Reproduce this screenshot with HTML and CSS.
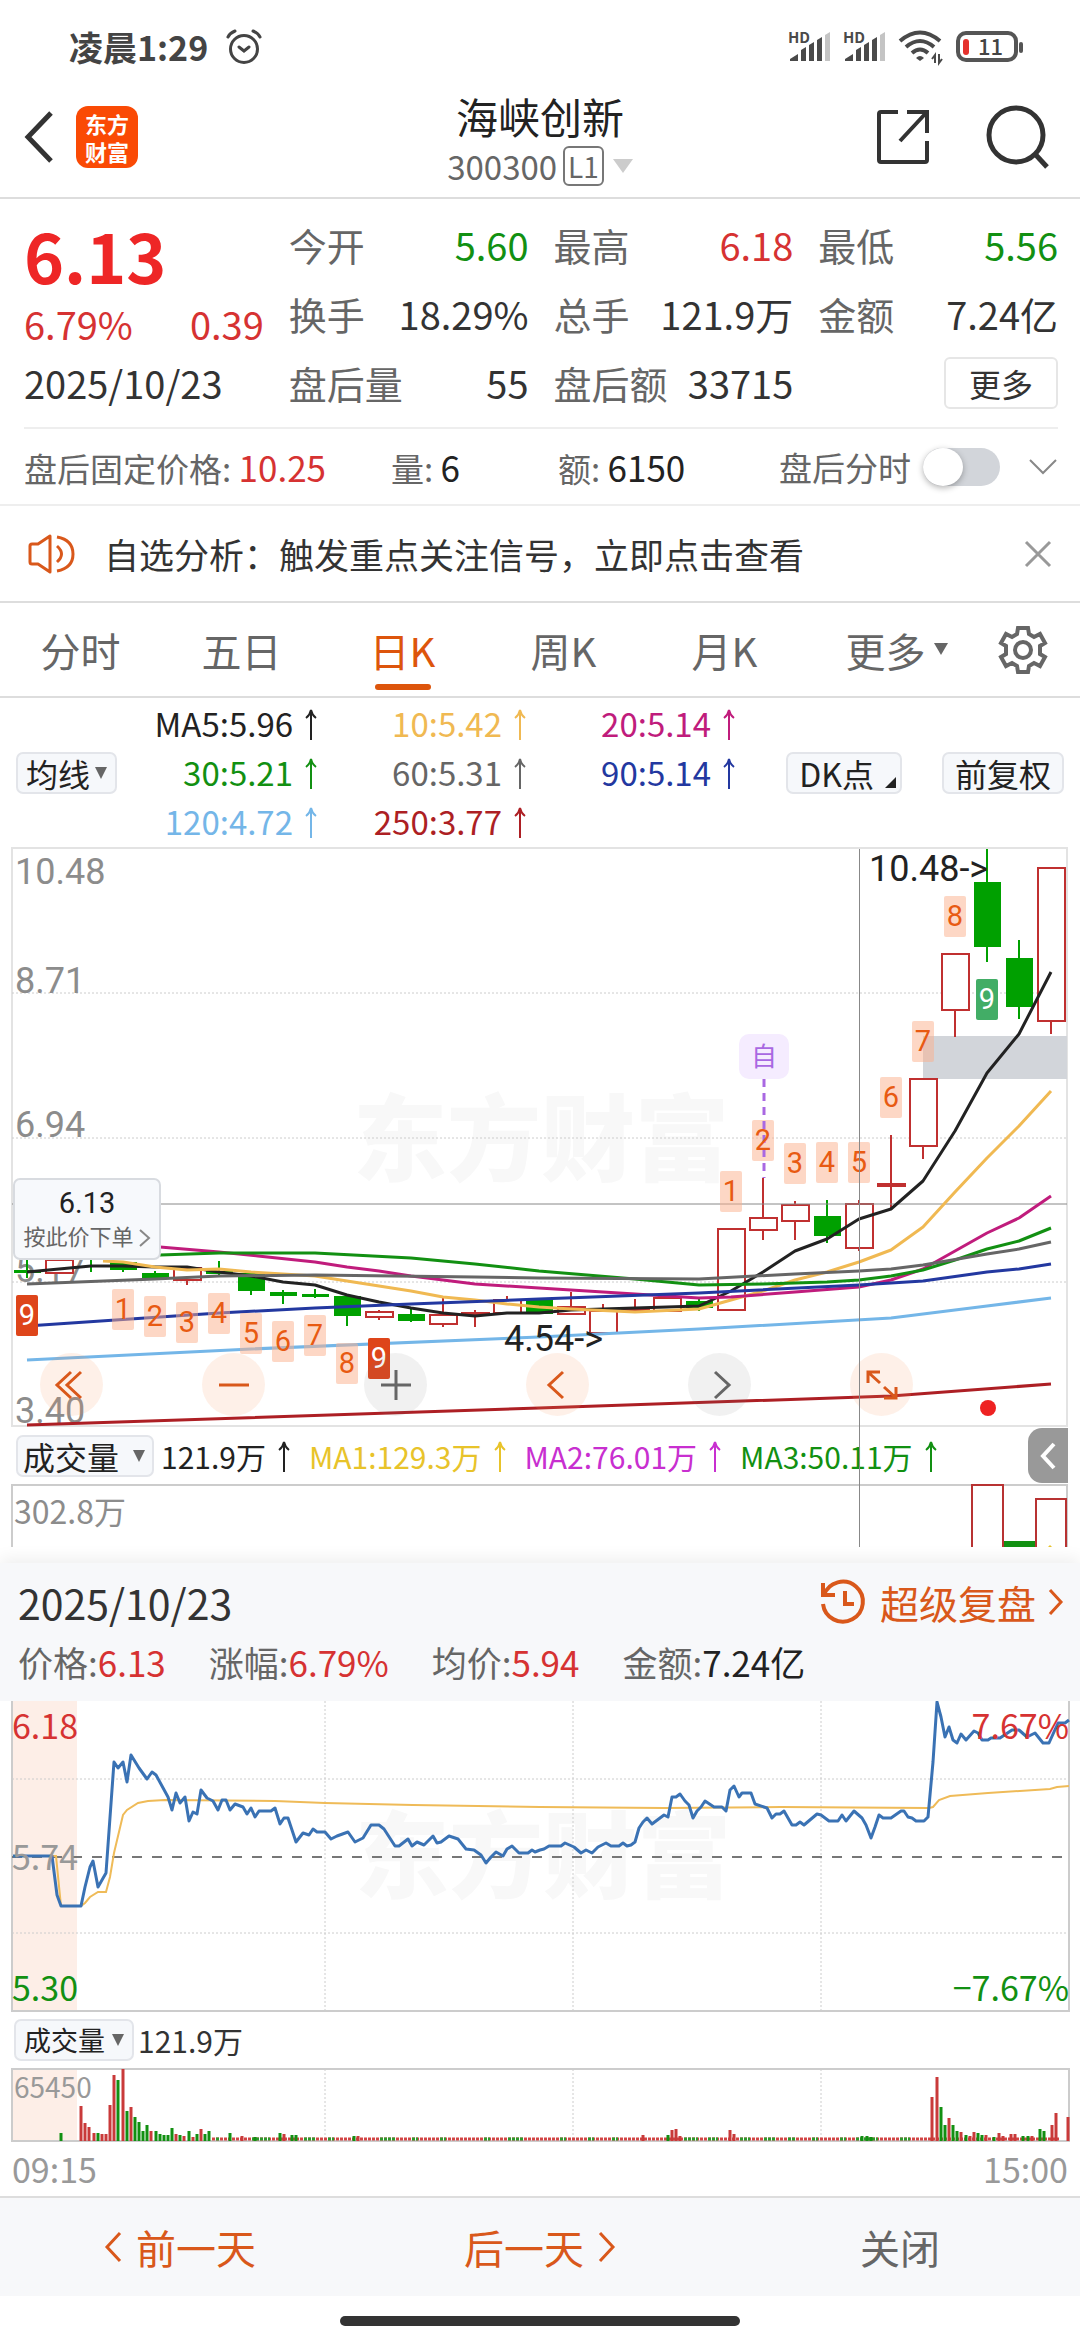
FILE: index.html
```html
<!DOCTYPE html>
<html lang="zh-CN">
<head>
  <meta charset="UTF-8" />
  <meta name="viewport" content="width=device-width, initial-scale=1.0">
  <title>海峡创新 300300</title>
  <link rel="stylesheet" href="styles.css">
</head>
<body>

<svg class="defs" width="0" height="0">
  <symbol id="up" viewBox="0 0 12 32">
    <path d="M6 31V2 M1 9Q5 6 6 1Q7 6 11 9" fill="none" stroke="currentColor" stroke-width="2"/>
  </symbol>
  <symbol id="signal" viewBox="0 0 42 32">
    <path d="M1 30V28L9 23V30Z M12 30V19L17 16V30Z M20 30V14L25 11V30Z M28 30V9L33 6V30Z" fill="#4a4a4a"/>
    <path d="M36 30V4L41 1V30Z" fill="#c4c4c4"/>
  </symbol>
</svg>

<div class="status-bar">
  <div class="status-left">
    <span>凌晨1:29</span>
    <svg width="36" height="36" viewBox="0 0 36 36" fill="none" stroke="#444" stroke-width="3" stroke-linecap="round">
      <circle cx="18" cy="20" r="13.5"/>
      <path d="M2 8 Q4 4 9 2 M34 8 Q32 4 27 2 M13 18 L18 22 L23 18"/>
    </svg>
  </div>
  <div class="status-right">
    <svg class="signal" width="42" height="32" viewBox="0 0 42 32">
      <use href="#signal"/>
      <text x="-1" y="12">HD</text>
    </svg>
    <svg class="signal" width="42" height="32" viewBox="0 0 42 32">
      <use href="#signal"/>
      <text x="-1" y="12">HD</text>
    </svg>
    <svg width="44" height="34" viewBox="0 0 44 34" fill="none" stroke="#4a4a4a" stroke-width="4">
      <path d="M1 11Q21 -6 41 11 M7 17Q21 5 35 17 M13 23Q21 16 29 23"/>
      <path d="M21 31L17 28Q21 24 25 28Z" fill="#4a4a4a" stroke="none"/>
      <path d="M36 33V25L33 29 M40 24V33L43 29" stroke-width="2"/>
    </svg>
    <svg class="battery" width="68" height="32" viewBox="0 0 68 32">
      <rect x="2" y="2" width="58" height="27" rx="8" fill="none" stroke="#555" stroke-width="4"/>
      <rect x="7" y="8" width="6" height="16" rx="3" fill="#e5322d"/>
      <path d="M65 13V20" stroke="#555" stroke-width="4" stroke-linecap="round"/>
      <text x="22" y="24">11</text>
    </svg>
  </div>
</div>

<header>
  <div class="header-side">
    <button class="icon-btn back-btn" aria-label="返回">
      <svg width="30" height="52" viewBox="0 0 30 52" fill="none" stroke="#333" stroke-width="5"><path d="M27 2L4 26L27 50"/></svg>
    </button>
    <div class="logo"><span>东方</span><span>财富</span></div>
  </div>
  <div class="header-title">
    <h1>海峡创新</h1>
    <div class="code">300300<span class="level">L1</span><i class="tri tri-light"></i></div>
  </div>
  <div class="header-side header-actions">
    <button class="icon-btn" aria-label="分享">
      <svg width="54" height="56" viewBox="0 0 54 56" fill="none" stroke="#333" stroke-width="4">
        <path d="M22 3H5Q3 3 3 5V51Q3 53 5 53H49Q51 53 51 51V32"/>
        <path d="M31 3H51V24 M50 4L24 32"/>
      </svg>
    </button>
    <button class="icon-btn" aria-label="搜索">
      <svg width="64" height="64" viewBox="0 0 64 64" fill="none" stroke="#333" stroke-width="5">
        <circle cx="30" cy="30" r="27"/><path d="M49 49L61 62"/>
      </svg>
    </button>
  </div>
</header>

<section class="quote">
  <div class="quote-main">
    <strong class="price">6.13</strong>
    <div class="change"><span>6.79%</span><span>0.39</span></div>
    <div class="date">2025/10/23</div>
  </div>
  <dl class="quote-grid">
    <div><dt>今开</dt><dd class="green">5.60</dd></div>
    <div><dt>最高</dt><dd class="red">6.18</dd></div>
    <div><dt>最低</dt><dd class="green">5.56</dd></div>
    <div><dt>换手</dt><dd>18.29%</dd></div>
    <div><dt>总手</dt><dd>121.9万</dd></div>
    <div><dt>金额</dt><dd>7.24亿</dd></div>
    <div><dt>盘后量</dt><dd>55</dd></div>
    <div><dt>盘后额</dt><dd>33715</dd></div>
    <div class="more-cell"><button class="more-btn">更多</button></div>
  </dl>
</section>

<section class="after-hours">
  <div>盘后固定价格: <b class="red">10.25</b></div>
  <div>量: <b>6</b></div>
  <div>额: <b>6150</b></div>
  <div class="after-toggle">
    <label for="after-switch">盘后分时</label>
    <input type="checkbox" id="after-switch" class="switch">
    <button class="icon-btn" aria-label="展开">
      <svg width="30" height="18" viewBox="0 0 30 18" fill="none" stroke="#888" stroke-width="2"><path d="M2 2L15 15L28 2"/></svg>
    </button>
  </div>
</section>

<section class="notice">
  <svg width="48" height="40" viewBox="0 0 48 40" fill="none" stroke="#d9581b" stroke-width="3" stroke-linejoin="round">
    <path d="M22 2V38L10 30H4Q2 30 2 28V12Q2 10 4 10H10Z"/>
    <path d="M29 12Q38 20 29 28 M29 3Q45 6 45 20Q45 34 29 37"/>
  </svg>
  <a href="#">自选分析：触发重点关注信号，立即点击查看</a>
  <button class="icon-btn" aria-label="关闭提示">
    <svg width="28" height="28" viewBox="0 0 28 28" stroke="#999" stroke-width="3"><path d="M2 2L26 26M26 2L2 26"/></svg>
  </button>
</section>

<nav class="tabs">
  <button>分时</button>
  <button>五日</button>
  <button class="active">日K</button>
  <button>周K</button>
  <button>月K</button>
  <button class="has-menu">更多</button>
  <button class="gear" aria-label="设置">
    <svg width="50" height="50" viewBox="0 0 50 50" fill="none" stroke="#666" stroke-width="4">
      <path d="M20 3H30L31 9L36 12L42 9L47 18L42 21V29L47 32L42 41L36 38L31 41L30 47H20L19 41L14 38L8 41L3 32L8 29V21L3 18L8 9L14 12L19 9Z"/>
      <circle cx="25" cy="25" r="8"/>
    </svg>
  </button>
</nav>

<div class="ma-bar">
  <button class="pill">均线<i class="tri"></i></button>
  <div class="ma-list">
    <span class="c-black">MA5:5.96<svg class="up"><use href="#up"/></svg></span>
    <span class="c-gold">10:5.42<svg class="up"><use href="#up"/></svg></span>
    <span class="c-magenta">20:5.14<svg class="up"><use href="#up"/></svg></span>
    <span class="c-green">30:5.21<svg class="up"><use href="#up"/></svg></span>
    <span class="c-gray">60:5.31<svg class="up"><use href="#up"/></svg></span>
    <span class="c-blue">90:5.14<svg class="up"><use href="#up"/></svg></span>
    <span class="c-sky">120:4.72<svg class="up"><use href="#up"/></svg></span>
    <span class="c-crimson">250:3.77<svg class="up"><use href="#up"/></svg></span>
  </div>
  <button class="pill pill-wide corner">DK点</button>
  <button class="pill pill-wide">前复权</button>
</div>

<section class="kline">
  <div class="kline-main">
    <svg class="chart roboto" viewBox="0 0 1080 580">
      <text class="watermark" x="541" y="327">东方财富</text>
      <rect class="frame" x="12" y="1" width="1055" height="578"/>
      <path class="dotted" d="M12 146H1067 M12 291H1067 M12 435H1067"/>
      <rect x="923" y="189" width="144" height="43" fill="#d2d5da"/>

      <g class="axis">
        <text x="15" y="37">10.48</text>
        <text x="15" y="146">8.71</text>
        <text x="15" y="290">6.94</text>
        <text x="15" y="435">5.17</text>
        <text x="15" y="576">3.40</text>
      </g>

      <!-- falling days -->
      <g fill="#00a000">
        <rect x="14" y="423" width="27" height="3"/>
        <rect x="110" y="415" width="27" height="8"/>
        <rect x="142" y="426" width="27" height="6"/>
        <rect x="206" y="424" width="27" height="3"/>
        <rect x="238" y="426" width="27" height="18"/>
        <rect x="270" y="445" width="27" height="4"/>
        <rect x="302" y="447" width="27" height="3"/>
        <rect x="334" y="449" width="27" height="20"/>
        <rect x="398" y="467" width="27" height="7"/>
        <rect x="526" y="452" width="27" height="15"/>
        <rect x="686" y="454" width="27" height="7"/>
        <rect x="814" y="369" width="27" height="20"/>
        <rect x="974" y="35" width="27" height="65"/>
        <rect x="1006" y="111" width="27" height="49"/>
      </g>
      <path stroke="#00a000" stroke-width="2" d="M27 413V431 M91 413V425 M123 415V425 M155 424V432 M219 414V428 M251 426V448 M283 443V457 M315 442V451 M347 449V479 M411 462V475 M699 452V464 M827 353V396 M987 2V115 M1019 93V172"/>

      <!-- rising days -->
      <g fill="#fff" stroke="#c03030" stroke-width="2">
        <path d="M187 433V438 M379 463V473 M443 451V480 M475 463V480 M507 449V453 M571 445V467 M603 457V464 M635 452V464 M763 331V393 M795 354V393 M859 353V404 M891 288V363 M923 299V312 M955 163V190 M1051 174V187"/>
        <rect x="46" y="413" width="27" height="13"/>
        <rect x="174" y="421" width="27" height="12"/>
        <rect x="366" y="465" width="27" height="5"/>
        <rect x="430" y="468" width="27" height="9"/>
        <rect x="462" y="466" width="27" height="2"/>
        <rect x="494" y="453" width="27" height="13"/>
        <rect x="558" y="460" width="27" height="7"/>
        <rect x="590" y="464" width="27" height="22"/>
        <rect x="622" y="461" width="27" height="2"/>
        <rect x="654" y="451" width="27" height="13"/>
        <rect x="718" y="382" width="27" height="81"/>
        <rect x="750" y="371" width="27" height="12"/>
        <rect x="782" y="358" width="27" height="16"/>
        <rect x="846" y="357" width="27" height="44"/>
        <rect x="878" y="337" width="27" height="2"/>
        <rect x="910" y="232" width="27" height="67"/>
        <rect x="942" y="107" width="27" height="56"/>
        <rect x="1038" y="21" width="27" height="153"/>
      </g>

      <!-- cross line on the selected price -->
      <path d="M12 357H1067" stroke="#888" stroke-width="1"/>

      <g class="lines">
        <polyline stroke="#222" points="27,425 91,419 123,419 155,420 187,420 219,425 251,429 283,435 315,438 347,448 379,455 411,461 443,466 475,469 507,466 539,466 571,463 603,462 635,461 667,460 699,459 731,444 763,425 795,404 827,392 859,372 891,362 923,334 955,284 987,226 1019,187 1051,125"/>
        <polyline stroke="#f0b952" points="103,414 123,415 155,420 187,423 219,422 251,425 283,427 315,429 347,434 379,439 411,444 443,450 475,453 507,457 539,460 571,462 635,465 699,462 731,453 763,444 795,433 827,425 859,415 891,403 923,380 955,345 987,311 1019,279 1051,244"/>
        <polyline stroke="#c01c7c" points="160,400 219,405 258,409 315,415 347,420 379,424 411,429 443,433 475,437 539,441 603,445 699,451 731,450 795,445 859,440 891,433 923,422 955,404 987,386 1019,371 1051,349"/>
        <polyline stroke="#129012" points="160,408 219,406 315,406 411,411 475,417 539,424 635,432 699,438 763,437 827,435 859,433 891,429 923,423 955,413 987,402 1019,394 1051,381"/>
        <polyline stroke="#666" points="27,437 155,432 219,429 315,428 475,430 539,431 699,432 795,427 859,424 891,422 923,418 987,407 1019,402 1051,395"/>
        <polyline stroke="#2338a0" points="27,479 219,466 315,461 411,457 539,452 699,446 859,438 923,434 987,425 1019,422 1051,417"/>
        <polyline stroke="#74b6e8" points="27,513 251,502 539,490 699,482 891,471 923,467 987,459 1051,451"/>
        <polyline stroke="#ad1f24" points="27,578 539,561 891,549 1051,537"/>
      </g>

      <!-- sequence counters -->
      <g class="count-bg">
        <rect x="112" y="442" width="22" height="41" rx="2"/>
        <rect x="144" y="449" width="22" height="41" rx="2"/>
        <rect x="176" y="455" width="22" height="41" rx="2"/>
        <rect x="208" y="446" width="22" height="41" rx="2"/>
        <rect x="240" y="466" width="22" height="41" rx="2"/>
        <rect x="272" y="474" width="22" height="41" rx="2"/>
        <rect x="304" y="468" width="22" height="41" rx="2"/>
        <rect x="336" y="496" width="22" height="41" rx="2"/>
        <rect x="720" y="324" width="22" height="41" rx="2"/>
        <rect x="752" y="273" width="22" height="41" rx="2"/>
        <rect x="784" y="296" width="22" height="41" rx="2"/>
        <rect x="816" y="295" width="22" height="41" rx="2"/>
        <rect x="848" y="295" width="22" height="41" rx="2"/>
        <rect x="880" y="230" width="22" height="41" rx="2"/>
        <rect x="912" y="174" width="22" height="41" rx="2"/>
        <rect x="944" y="49" width="22" height="41" rx="2"/>
      </g>
      <rect x="16" y="448" width="22" height="41" rx="2" fill="#de451a"/>
      <rect x="368" y="491" width="22" height="41" rx="2" fill="#de451a"/>
      <rect x="976" y="132" width="22" height="41" rx="2" fill="#42ad66"/>
      <path d="M764 232V331" stroke="#a968e2" stroke-width="3" stroke-dasharray="8 6"/>
      <g class="count">
        <text x="123" y="472">1</text>
        <text x="155" y="479">2</text>
        <text x="187" y="485">3</text>
        <text x="219" y="476">4</text>
        <text x="251" y="496">5</text>
        <text x="283" y="504">6</text>
        <text x="315" y="498">7</text>
        <text x="347" y="526">8</text>
        <text x="731" y="354">1</text>
        <text x="763" y="303">2</text>
        <text x="795" y="326">3</text>
        <text x="827" y="325">4</text>
        <text x="859" y="325">5</text>
        <text x="891" y="260">6</text>
        <text x="923" y="204">7</text>
        <text x="955" y="79">8</text>
        <text class="on" x="27" y="478">9</text>
        <text class="on" x="379" y="521">9</text>
        <text class="on" x="987" y="162">9</text>
      </g>

      <rect x="739" y="187" width="50" height="45" rx="10" fill="#f5ecff"/>
      <text class="self" x="764" y="219">自</text>
      <text class="mark" x="869" y="34">10.48-&gt;</text>
      <text class="mark" x="504" y="504">4.54-&gt;</text>
      <circle cx="988" cy="561" r="8" fill="#ee2222"/>
    </svg>

    <button class="order-tip">
      <span class="tip-price">6.13</span>
      <span class="tip-text">按此价下单<svg width="12" height="18" viewBox="0 0 12 18" fill="none" stroke="#888" stroke-width="2"><path d="M1 1L10 9L1 17"/></svg></span>
    </button>

    <div class="chart-tools">
      <button aria-label="最左"><svg width="32" height="32" viewBox="0 0 32 32"><path d="M15 3L1 16L15 29 M25 3L11 16L25 29"/></svg></button>
      <button aria-label="缩小"><svg width="32" height="32" viewBox="0 0 32 32"><path d="M1 16H31"/></svg></button>
      <button class="off" aria-label="放大"><svg width="32" height="32" viewBox="0 0 32 32"><path d="M1 16H31 M16 1V31"/></svg></button>
      <button aria-label="左移"><svg width="32" height="32" viewBox="0 0 32 32"><path d="M21 3L7 16L21 29"/></svg></button>
      <button class="off" aria-label="右移"><svg width="32" height="32" viewBox="0 0 32 32"><path d="M11 3L25 16L11 29"/></svg></button>
      <button aria-label="全屏"><svg width="32" height="32" viewBox="0 0 32 32"><path d="M2 14V3H14 M3 4L14 14 M30 18V29H18 M29 28L18 18"/></svg></button>
    </div>
  </div>

  <div class="vol-bar">
    <button class="pill">成交量<i class="tri"></i></button>
    <span class="c-black">121.9万<svg class="up"><use href="#up"/></svg></span>
    <span class="c-yellow">MA1:129.3万<svg class="up"><use href="#up"/></svg></span>
    <span class="c-violet">MA2:76.01万<svg class="up"><use href="#up"/></svg></span>
    <span class="c-green">MA3:50.11万<svg class="up"><use href="#up"/></svg></span>
    <button class="side-tab" aria-label="展开侧栏">
      <svg width="18" height="28" viewBox="0 0 18 28" fill="none" stroke="#fff" stroke-width="4"><path d="M15 2L4 14L15 26"/></svg>
    </button>
  </div>

  <svg class="chart" viewBox="0 0 1080 63">
    <path d="M12 63V1H1067V63" fill="none" stroke="#ccc" stroke-width="2"/>
    <text class="vol-max" x="14" y="40">302.8万</text>
    <rect x="1004" y="57" width="31" height="6" fill="#129012"/>
    <path d="M972 63V1H1003V63 M1036 63V15H1066V63" fill="none" stroke="#b83232" stroke-width="2"/>
    <path d="M1048 63L1050 61L1052 63" fill="#e8c32a"/>
  </svg>
  <div class="cross-v"></div>
</section>

<section class="day-panel">
  <div class="day-head">
    <span class="day-date">2025/10/23</span>
    <a href="#" class="replay">
      <svg width="48" height="46" viewBox="0 0 48 46" fill="none" stroke="#d9581b" stroke-width="4">
        <path d="M4 16A20 20 0 1 1 3 25"/>
        <path d="M3 4V16H15 M25 12V25H34"/>
      </svg>
      超级复盘
      <svg width="16" height="28" viewBox="0 0 16 28" fill="none" stroke="#d9581b" stroke-width="3"><path d="M2 2L13 14L2 26"/></svg>
    </a>
  </div>
  <div class="day-info">
    <span>价格:<b class="red">6.13</b></span>
    <span>涨幅:<b class="red">6.79%</b></span>
    <span>均价:<b class="red">5.94</b></span>
    <span>金额:<b>7.24亿</b></span>
  </div>
</section>

<section class="minute">
  <svg class="chart" viewBox="0 0 1080 311">
    <rect x="12" y="0" width="65" height="310" fill="#fdeee7"/>
    <text class="watermark" x="543" y="190">东方财富</text>
    <path d="M12 0V310H1069V0" fill="none" stroke="#ccc" stroke-width="2"/>
    <path class="dotted" d="M12 78H1069 M12 232H1069 M325 0V310 M573 0V310 M821 0V310"/>
    <path d="M12 156H1069" stroke="#777" stroke-width="2" stroke-dasharray="10 10"/>
    <polyline fill="none" stroke="#efbb58" stroke-width="2" points="52,155 56,155 61,205 81,205 85,202 90,196 98,191 106,191 110,176 114,152 123,114 127,109 138,102 148,100 165,99 275,100 325,102 413,104 540,106 664,107 781,106 929,107 933,106 939,99 950,95 988,92 1050,88 1057,86 1069,85"/>
    <polyline fill="none" stroke="#3a72b4" stroke-width="3" stroke-linejoin="round" points="13,155 52,155 57,194 61,205 81,205 85,186 90,166 93,160 98,186 106,172 114,61 118,67 123,61 127,81 131,54 139,67 147,78 152,71 156,74 168,96 172,109 176,92 180,102 185,96 189,120 193,111 197,113 201,89 207,97 213,100 218,109 222,99 226,99 230,109 235,103 243,106 247,113 251,107 255,116 259,110 271,110 275,107 280,123 284,117 288,117 296,141 303,132 309,134 313,128 317,131 325,131 331,138 337,135 348,131 355,141 363,137 371,124 379,124 384,128 395,145 399,145 408,138 412,145 417,141 424,144 433,135 437,142 441,141 449,135 458,138 466,148 474,149 481,154 486,162 491,156 496,151 503,155 507,148 512,145 519,152 528,152 532,149 535,151 540,149 544,148 549,145 561,145 565,142 574,146 581,152 586,149 592,152 598,146 606,142 611,145 619,145 623,142 627,145 631,144 635,141 639,127 643,121 647,117 652,123 664,114 668,116 672,96 676,96 680,93 685,100 689,104 693,117 697,110 701,106 705,100 714,106 722,106 726,110 730,89 734,85 739,96 742,92 751,92 755,103 767,107 772,117 776,113 780,113 784,110 792,124 796,124 800,121 804,124 817,113 821,114 829,120 838,120 842,114 846,120 854,110 862,117 866,124 871,137 875,126 879,114 883,117 891,117 901,110 904,110 908,116 912,117 916,120 924,120 928,116 933,61 937,1 941,16 945,36 949,26 953,39 957,42 961,33 966,39 974,30 978,32 982,39 988,39 991,37 1000,37 1012,29 1019,29 1027,36 1035,32 1043,42 1049,42 1058,22 1065,22 1069,19"/>
    <g class="minute-axis">
      <text x="12" y="38" fill="#d63232">6.18</text>
      <text x="12" y="169" fill="#999">5.74</text>
      <text x="12" y="300" fill="#129012">5.30</text>
      <text class="end" x="1069" y="38" fill="#d63232">7.67%</text>
      <text class="end" x="1069" y="300" fill="#129012">−7.67%</text>
    </g>
  </svg>

  <div class="minute-bar">
    <button class="pill pill-sm">成交量<i class="tri"></i></button>
    <span>121.9万</span>
  </div>

  <svg class="chart" viewBox="0 0 1080 74">
    <rect x="12" y="1" width="65" height="72" fill="#fdeee7"/>
    <rect class="frame-gray" x="12" y="1" width="1057" height="72"/>
    <path class="dotted" d="M325 1V74 M573 1V74 M821 1V74"/>
    <path d="M212 71H1060" stroke="#d24545" stroke-width="3" stroke-dasharray="3 1"/>
    <path d="M216 71H219 M252 71H270 M304 71H316 M328 71H334 M380 71H396 M412 71H418 M440 71H446 M484 71H490 M508 71H524 M560 71H566 M588 71H594 M612 71H618 M684 71H698 M708 71H718 M740 71H750 M764 71H776 M788 71H796 M812 71H818 M840 71H846 M856 71H878 M900 71H910" stroke="#2c9a2c" stroke-width="3" stroke-dasharray="3 1"/>
    <path stroke="#c93a3a" stroke-width="3" d="M81 73V38 M85 73V55 M89 73V59 M94 73V65 M102 73V66 M106 73V66 M110 73V37 M114 73V7 M123 73V1 M131 73V39 M151 73V63 M176 73V66 M184 73V68 M193 73V69 M201 73V61 M242 73V68 M284 73V66 M358 73V68 M643 73V67 M672 73V62 M676 73V61 M680 73V68 M730 73V62 M734 73V66 M932 73V29 M937 73V9 M949 73V50 M961 73V64 M970 73V68 M974 73V64 M986 73V67 M999 73V65 M1003 73V68 M1011 73V66 M1015 73V66 M1032 73V68 M1052 73V57 M1056 73V45 M1068 73V49"/>
    <path stroke="#129012" stroke-width="3" d="M61 73V65 M98 73V65 M118 73V12 M127 73V43 M135 73V49 M139 73V54 M143 73V63 M147 73V57 M156 73V63 M160 73V66 M164 73V67 M168 73V67 M172 73V60 M180 73V67 M189 73V63 M197 73V66 M205 73V66 M209 73V63 M230 73V65 M255 73V69 M280 73V65 M292 73V67 M296 73V67 M354 73V68 M668 73V67 M862 73V68 M867 73V68 M871 73V69 M941 73V39 M945 73V57 M953 73V57 M957 73V63 M966 73V67 M978 73V65 M982 73V67 M994 73V69 M1023 73V68 M1028 73V68 M1040 73V61 M1044 73V63"/>
    <text class="minute-max" x="14" y="30">65450</text>
  </svg>

  <div class="time-axis"><span>09:15</span><span>15:00</span></div>
</section>

<footer>
  <button class="accent">
    <svg width="18" height="30" viewBox="0 0 18 30" fill="none" stroke="#d9581b" stroke-width="3"><path d="M16 1L3 15L16 29"/></svg>
    前一天
  </button>
  <button class="accent">
    后一天
    <svg width="18" height="30" viewBox="0 0 18 30" fill="none" stroke="#d9581b" stroke-width="3"><path d="M2 1L15 15L2 29"/></svg>
  </button>
  <button>关闭</button>
</footer>
<div class="home-bar"></div>

</body>
</html>
```
FILE: styles.css
```css
* { margin: 0; padding: 0; box-sizing: border-box; }

body {
  background: #fff;
  color: #333;
  font-family: "Noto Sans CJK SC", "Noto Sans", sans-serif;
  font-size: 33px;
}

button {
  font: inherit;
  color: inherit;
  background: none;
  border: none;
  cursor: pointer;
}

a {
  color: inherit;
  text-decoration: none;
}

svg { display: block; overflow: visible; }
b, i { font-weight: normal; font-style: normal; }

.defs { position: absolute; }

.red { color: #d63232; }
.green { color: #129012; }
.icon-btn { display: flex; }

.tri {
  display: inline-block;
  border: 6px solid transparent;
  border-top: 12px solid #666;
  border-bottom: 0;
}

.tri-light {
  border-width: 14px 10px 0;
  border-top-color: #ccc;
}

/* trend arrow after a value */
.up {
  display: inline-block;
  width: 12px;
  height: 32px;
  margin-left: 12px;
  vertical-align: -4px;
}

/* status bar */
.status-bar {
  display: flex;
  justify-content: space-between;
  align-items: center;
  height: 75px;
  padding: 18px 56px 0 69px;
}

.status-left {
  display: flex;
  align-items: center;
  gap: 18px;
  font-size: 34px;
  line-height: 40px;
  font-weight: 700;
  color: #444;
}

.status-right {
  display: flex;
  align-items: center;
  gap: 13px;
}

.signal text {
  font-size: 15px;
  font-weight: 700;
  fill: #4a4a4a;
}

.battery text {
  font-size: 22px;
  font-weight: 500;
  fill: #444;
}

/* header */
header {
  display: flex;
  justify-content: space-between;
  padding: 12px 30px 10px;
  border-bottom: 2px solid #ddd;
}

.header-side {
  display: flex;
  align-items: center;
  flex: 1;
  gap: 22px;
}

.header-actions {
  justify-content: flex-end;
  gap: 56px;
}

.back-btn { margin-left: -6px; }

.logo {
  display: flex;
  flex-direction: column;
  align-items: center;
  justify-content: center;
  width: 62px;
  height: 62px;
  border-radius: 12px;
  background: #fa4a05;
  color: #fff;
  font-size: 22px;
  font-weight: 700;
  line-height: 28px;
}

.header-title { text-align: center; }

h1 {
  font-size: 42px;
  font-weight: 400;
  line-height: 58px;
  color: #222;
}

.code {
  display: flex;
  align-items: center;
  justify-content: center;
  line-height: 42px;
  color: #666;
}

.level {
  border: 2px solid #777;
  border-radius: 6px;
  padding: 0 3px;
  margin: 0 9px 0 6px;
  font-size: 28px;
  line-height: 36px;
}

/* quote */
.quote {
  display: flex;
  gap: 25px;
  margin: 0 22px 0 24px;
  padding: 11px 0 10px;
  border-bottom: 2px solid #eee;
  font-size: 38px;
}

.quote-main {
  flex: 1;
  display: flex;
  flex-direction: column;
}

.price {
  font-size: 68px;
  line-height: 90px;
  color: #ee2626;
}

.change {
  display: flex;
  justify-content: space-between;
  line-height: 48px;
  color: #d63232;
}

.date { line-height: 69px; }

.quote-grid {
  flex: 3;
  flex-basis: 50px;
  display: grid;
  grid-template-columns: repeat(3, 1fr);
  column-gap: 25px;
  line-height: 69px;
}

.quote-grid div {
  display: flex;
  justify-content: space-between;
}

.quote-grid dt { color: #666; }

.quote-grid .more-cell {
  justify-content: flex-end;
  align-items: center;
}

.more-btn {
  width: 114px;
  height: 52px;
  border: 2px solid #e6e6e6;
  border-radius: 6px;
  font-size: 32px;
  line-height: 46px;
}

/* after hours */
.after-hours {
  display: grid;
  grid-template-columns: 367px 167px 1fr auto;
  align-items: center;
  height: 77px;
  padding: 0 22px 0 24px;
  border-bottom: 2px solid #eee;
  color: #666;
}

.after-hours b {
  font-size: 35px;
  color: #222;
}

.after-hours b.red { color: #d63232; }

.after-toggle {
  display: flex;
  align-items: center;
}

.switch {
  appearance: none;
  width: 77px;
  height: 38px;
  margin: 0 28px 0 12px;
  border-radius: 19px;
  background: #d2d5da;
}

.switch::before {
  content: "";
  display: block;
  width: 40px;
  height: 38px;
  border-radius: 50%;
  background: #fff;
  box-shadow: 0 2px 6px rgba(0, 0, 0, 0.3);
}

/* notice */
.notice {
  display: flex;
  align-items: center;
  height: 97px;
  padding: 0 28px;
  border-bottom: 2px solid #ddd;
  font-size: 35px;
}

.notice a {
  flex: 1;
  margin-left: 28px;
}

/* tabs */
.tabs {
  display: flex;
  height: 95px;
  border-bottom: 2px solid #ddd;
  color: #666;
  font-size: 40px;
}

.tabs button {
  flex: 161;
  position: relative;
}

.tabs .active { color: #dd550c; }

.tabs .active::after {
  content: "";
  position: absolute;
  left: 50%;
  bottom: 6px;
  width: 56px;
  height: 6px;
  margin-left: -28px;
  border-radius: 3px;
  background: #dd550c;
}

.tabs .has-menu::after {
  content: "";
  position: absolute;
  right: 18px;
  top: 40px;
  border: 7px solid transparent;
  border-top: 12px solid #666;
  border-bottom: 0;
}

.tabs .gear {
  flex: 114;
  display: flex;
  align-items: center;
  justify-content: center;
}

/* moving averages */
.ma-bar {
  display: flex;
  align-items: center;
  padding: 1px 16px;
}

.pill {
  display: flex;
  align-items: center;
  gap: 5px;
  height: 42px;
  padding: 0 8px;
  border: 2px solid #e3e5ea;
  border-radius: 7px;
  background: #f6f8fb;
  color: #222;
  font-size: 32px;
  line-height: 36px;
  white-space: nowrap;
}

.pill-wide { padding: 0 11px; }

.corner {
  position: relative;
  padding-right: 26px;
  margin-left: auto;
  margin-right: 40px;
}

.corner::after {
  content: "";
  position: absolute;
  right: 4px;
  bottom: 4px;
  border-left: 11px solid transparent;
  border-bottom: 11px solid #222;
}

.ma-list {
  display: grid;
  grid-template-columns: 200px 209px 209px;
  grid-auto-rows: 49px;
  line-height: 49px;
  text-align: right;
  white-space: nowrap;
}

.c-black { color: #222; }
.c-gold { color: #f0b952; }
.c-magenta { color: #c01c7c; }
.c-green { color: #129012; }
.c-gray { color: #666; }
.c-blue { color: #2338a0; }
.c-sky { color: #74b6e8; }
.c-crimson { color: #ad1f24; }
.c-yellow { color: #e8c32a; }
.c-violet { color: #c82fd0; }

/* k-line chart */
.kline { position: relative; }
.kline-main { position: relative; }

.chart {
  width: 100%;
  height: auto;
  overflow: hidden;
}

.roboto { font-family: Roboto, "Noto Sans CJK SC", sans-serif; }

.watermark {
  font-family: "Noto Sans CJK SC", sans-serif;
  font-size: 94px;
  font-weight: 900;
  text-anchor: middle;
  fill: #f8f8f8;
}

.frame {
  fill: none;
  stroke: #e3e3e3;
  stroke-width: 2;
}

.frame-gray {
  fill: none;
  stroke: #ccc;
  stroke-width: 2;
}

.dotted {
  fill: none;
  stroke: #ccc;
  stroke-width: 1;
  stroke-dasharray: 2 2;
}

.lines {
  fill: none;
  stroke-width: 3;
  stroke-linejoin: round;
}

.axis {
  font-size: 36px;
  fill: #8c8c8c;
}

.mark {
  font-size: 36px;
  fill: #222;
}

.count-bg {
  fill: #fbb08c;
  fill-opacity: 0.5;
}

.count {
  font-size: 29px;
  text-anchor: middle;
  fill: #e85a12;
}

.count .on { fill: #fff; }

.self {
  font-size: 26px;
  text-anchor: middle;
  fill: #a968e2;
}

.order-tip {
  position: absolute;
  left: 13px;
  top: 331px;
  display: flex;
  flex-direction: column;
  align-items: center;
  width: 148px;
  height: 82px;
  padding-top: 5px;
  border: 2px solid #d8dbe0;
  border-radius: 7px;
  background: #f7f9fc;
  font-family: Roboto, "Noto Sans CJK SC", sans-serif;
}

.tip-price {
  font-size: 29px;
  line-height: 36px;
  color: #222;
}

.tip-text {
  display: flex;
  align-items: center;
  gap: 5px;
  font-size: 22px;
  line-height: 34px;
  color: #666;
}

.chart-tools {
  position: absolute;
  left: 40px;
  right: 167px;
  bottom: 11px;
  display: flex;
  justify-content: space-between;
}

.chart-tools button {
  display: flex;
  align-items: center;
  justify-content: center;
  width: 63px;
  height: 63px;
  border-radius: 50%;
  background: rgba(250, 150, 90, 0.14);
}

.chart-tools .off { background: rgba(120, 120, 120, 0.1); }

.chart-tools path {
  fill: none;
  stroke: #d9581b;
  stroke-width: 3;
}

.chart-tools .off path { stroke: #666; }

.cross-v {
  position: absolute;
  top: 2px;
  bottom: 0;
  left: 79.5%;
  width: 1px;
  background: #888;
}

/* volume */
.vol-bar {
  display: flex;
  align-items: center;
  height: 57px;
  padding: 0 12px 0 16px;
  font-size: 30px;
  white-space: nowrap;
}

.vol-bar .pill {
  gap: 14px;
  padding: 0 7px 0 5px;
  margin-right: 7px;
}

.vol-bar span { margin-right: 19px; }

.side-tab {
  display: flex;
  align-items: center;
  justify-content: center;
  width: 40px;
  height: 55px;
  margin-left: auto;
  border-radius: 14px 0 0 14px;
  background: #999;
}

.vol-max {
  font-size: 32px;
  fill: #8c8c8c;
}

/* selected day */
.day-panel {
  margin-top: 16px;
  padding: 10px 16px 9px 18px;
  background: #f7f8fa;
  box-shadow: 0 -4px 16px rgba(0, 0, 0, 0.07);
}

.day-head {
  display: flex;
  justify-content: space-between;
  align-items: center;
  line-height: 58px;
}

.day-date { font-size: 41px; }

.replay {
  display: flex;
  align-items: center;
  gap: 12px;
  color: #d9581b;
  font-size: 39px;
}

.day-info {
  display: flex;
  gap: 43px;
  font-size: 35px;
  line-height: 61px;
  color: #666;
}

.day-info b { color: #222; }
.day-info b.red { color: #d63232; }

/* minute chart */
.minute { background: #fff; position: relative; }

.minute-axis { font-size: 34px; }
.minute-axis .end { text-anchor: end; }

.minute-bar {
  display: flex;
  align-items: center;
  gap: 4px;
  height: 56px;
  padding: 0 14px;
  font-size: 30px;
}

.pill-sm {
  font-size: 27px;
  gap: 7px;
}

.minute-max {
  font-size: 28px;
  fill: #999;
}

.time-axis {
  display: flex;
  justify-content: space-between;
  padding: 0 12px;
  color: #999;
  font-size: 34px;
  line-height: 54px;
}

/* footer */
footer {
  display: grid;
  grid-template-columns: repeat(3, 1fr);
  height: 100px;
  border-top: 2px solid #ddd;
  background: #f7f8fa;
  font-size: 40px;
  color: #666;
}

footer button {
  display: flex;
  align-items: center;
  justify-content: center;
  gap: 14px;
}

footer .accent { color: #d9581b; }

.home-bar {
  width: 37%;
  height: 10px;
  margin: 20px auto 14px;
  border-radius: 5px;
  background: #333;
}
```
